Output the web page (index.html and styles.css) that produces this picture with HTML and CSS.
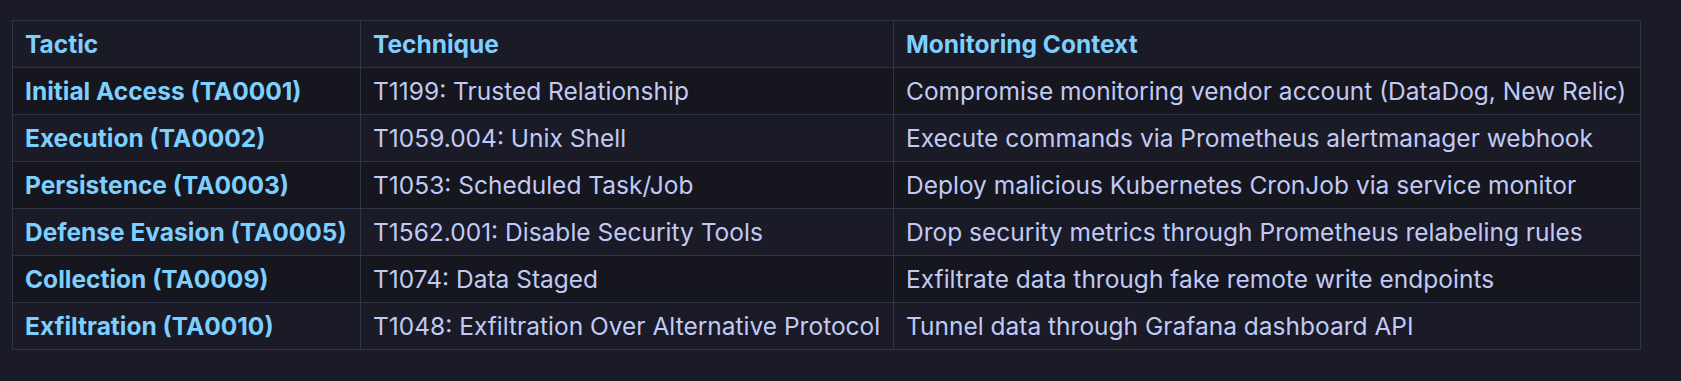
FILE: index.html
```html
<!DOCTYPE html>
<html>
<head>
    <title>ATT&amp;CK Mapping</title>
    <meta charset="utf-8">
    <meta name="viewport" content="width=device-width, initial-scale=1">
    <link rel="stylesheet" href="styles.css">
</head>
<body>
    <table class="attack-table">
        <colgroup>
            <col class="col-tactic">
            <col class="col-technique">
            <col class="col-context">
        </colgroup>
        <thead>
            <tr>
                <th>Tactic</th>
                <th>Technique</th>
                <th>Monitoring Context</th>
            </tr>
        </thead>
        <tbody>
            <tr>
                <td class="tactic">Initial Access (TA0001)</td>
                <td>T1199: Trusted Relationship</td>
                <td>Compromise monitoring vendor account (DataDog, New Relic)</td>
            </tr>
            <tr>
                <td class="tactic">Execution (TA0002)</td>
                <td>T1059.004: Unix Shell</td>
                <td>Execute commands via Prometheus alertmanager webhook</td>
            </tr>
            <tr>
                <td class="tactic">Persistence (TA0003)</td>
                <td>T1053: Scheduled Task/Job</td>
                <td>Deploy malicious Kubernetes CronJob via service monitor</td>
            </tr>
            <tr>
                <td class="tactic">Defense Evasion (TA0005)</td>
                <td>T1562.001: Disable Security Tools</td>
                <td>Drop security metrics through Prometheus relabeling rules</td>
            </tr>
            <tr>
                <td class="tactic">Collection (TA0009)</td>
                <td>T1074: Data Staged</td>
                <td>Exfiltrate data through fake remote write endpoints</td>
            </tr>
            <tr>
                <td class="tactic">Exfiltration (TA0010)</td>
                <td>T1048: Exfiltration Over Alternative Protocol</td>
                <td>Tunnel data through Grafana dashboard API</td>
            </tr>
        </tbody>
    </table>
</body>
</html>
```

FILE: styles.css
```css
body {
    margin: 0;
    padding: 20px 0 0 12px;
    background: #1a1b26;
    color: #c0caf5;
    font-family: Inter, "Noto Sans", sans-serif;
}
.attack-table {
    border-collapse: collapse;
    table-layout: fixed;
    width: 1628px;
    font-size: 24.5px;
    line-height: 30px;
}
.col-tactic { width: 348px; }
.col-technique { width: 533px; }
.col-context { width: 747px; }
.attack-table th,
.attack-table td {
    border: 1px solid #2f3449;
    padding: 8px 12px;
    text-align: left;
    white-space: nowrap;
}
.attack-table th {
    color: #7dcfff;
    font-weight: 700;
    background: #1a1b26;
}
.attack-table tbody tr:nth-child(odd) {
    background: #16161e;
}
.attack-table tbody tr:nth-child(even) {
    background: #1a1b26;
}
.tactic {
    color: #7dcfff;
    font-weight: 700;
}
```
